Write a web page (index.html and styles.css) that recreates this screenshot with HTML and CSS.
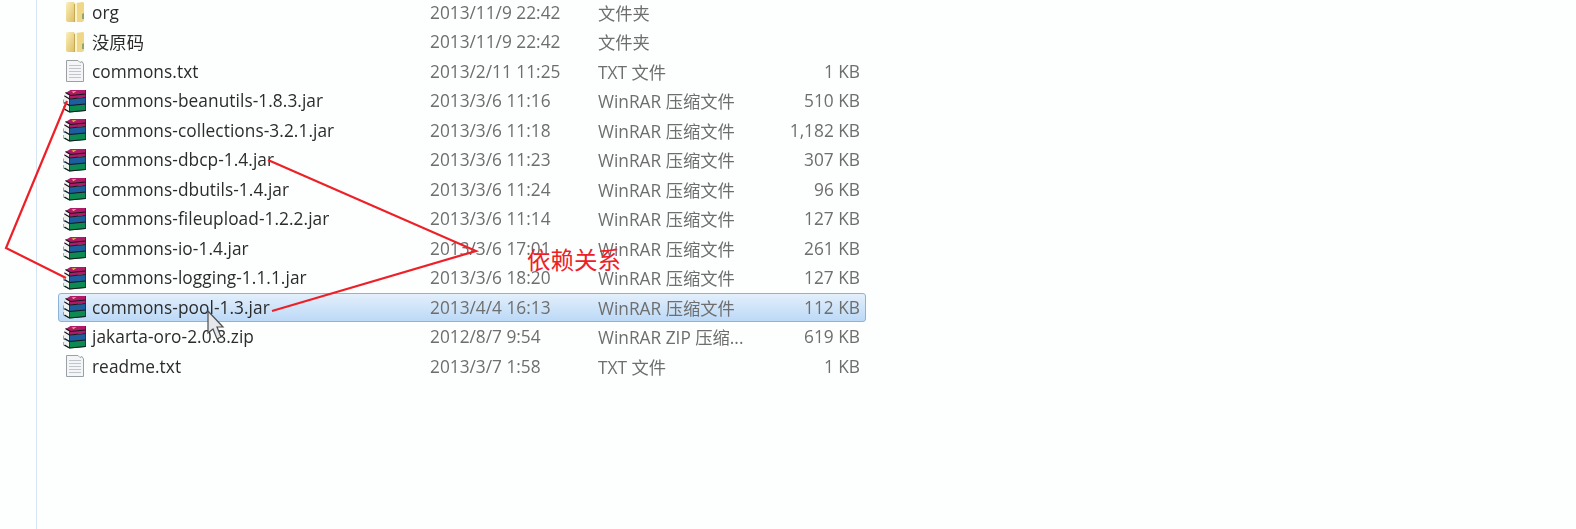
FILE: index.html
```html
<!DOCTYPE html>
<html lang="en">
<head>
    <meta charset="UTF-8">
    <title>commons</title>
    <link rel="stylesheet" href="styles.css">
</head>
<body>
    <svg class="defs" width="0" height="0">
        <defs>
            <linearGradient id="folderFill" x1="0" y1="0" x2="1" y2="1">
                <stop offset="0" stop-color="#fbf0b8"/>
                <stop offset="1" stop-color="#dcbc62"/>
            </linearGradient>
            <symbol id="folder" viewBox="0 0 20 22">
                <path d="M1 3 Q1 1 3 1 L9 1 L10 3 L10 21 L3 21 Q1 21 1 19 Z" fill="url(#folderFill)"/>
                <path d="M11 2 L18 1 Q19 1 19 3 L19 19 Q19 21 17 21 L11 21 Z" fill="#efd787"/>
                <path d="M10 2 L12 2 L12 21 L10 21 Z" fill="#fbf3c8"/>
                <path d="M9 3 L10 3 L10 21 L9 21 Z" fill="#c7a854"/>
                <path d="M17 13 L19 12 L19 18 L17 18 Z" fill="#8fa86a"/>
            </symbol>
            <symbol id="txt" viewBox="0 0 20 24">
                <path d="M1.500 1.500 L13 1.500 L15 3.500 L17 2.500 L18.500 5 L18.500 22.500 L1.500 22.500 Z" fill="#f3f5f7" stroke="#9aa0a4"/>
                <path d="M4 6.500 H16 M4 9.500 H16 M4 12.500 H16 M4 15.500 H16 M4 18.500 H16" stroke="#bfc5ca"/>
            </symbol>
            <symbol id="rar" viewBox="0 0 24 24">
                <!-- three stacked books: white page edge on the left, coloured cover on the right -->
                <path d="M1 17 L7 16 L23 15 L23 22 L7 23.500 L1 20.500 Z" fill="#0c8a52"/>
                <path d="M1 10.500 L7 10 L23 8.500 L23 15.500 L7 17 L1 14.500 Z" fill="#1d5e9e"/>
                <path d="M3 4 L8 1 L23 1 L23 8 L7 10 L2 7 Z" fill="#b01a68"/>
                <path d="M1.500 8 L7 10.500 L7 16 L1.500 13.500 Z M1.500 14.500 L7 17 L7 22.500 L1.500 20 Z M2.500 3.500 L7 6.500 L7 9.500 L2.500 7 Z" fill="#eef1ee"/>
                <path d="M2 7 L7 10 L23 8.500 M2 13.500 L7 16.500 L23 15 M2 20 L7 23 L23 21.500 M3 3.500 L8 6.500 L23 5" stroke="#15191c" stroke-width="1.200" fill="none"/>
                <path d="M7 6.500 V23 M23 1 V22" stroke="#15191c" stroke-width="0.800" fill="none"/>
                <path d="M9 2.500 L14 2 L11 4 Z" fill="#e9c34a"/>
            </symbol>
        </defs>
    </svg>

    <div class="sidebar-line"></div>

    <div class="file-list">
        <div class="file-row"><svg class="icon icon-folder"><use href="#folder"/></svg><span class="name">org</span><span class="detail">2013/11/9 22:42</span><span class="detail">文件夹</span><span class="detail size"></span></div>
        <div class="file-row"><svg class="icon icon-folder"><use href="#folder"/></svg><span class="name">没原码</span><span class="detail">2013/11/9 22:42</span><span class="detail">文件夹</span><span class="detail size"></span></div>
        <div class="file-row"><svg class="icon icon-txt"><use href="#txt"/></svg><span class="name">commons.txt</span><span class="detail">2013/2/11 11:25</span><span class="detail">TXT 文件</span><span class="detail size">1 KB</span></div>
        <div class="file-row"><svg class="icon"><use href="#rar"/></svg><span class="name">commons-beanutils-1.8.3.jar</span><span class="detail">2013/3/6 11:16</span><span class="detail">WinRAR 压缩文件</span><span class="detail size">510 KB</span></div>
        <div class="file-row"><svg class="icon"><use href="#rar"/></svg><span class="name">commons-collections-3.2.1.jar</span><span class="detail">2013/3/6 11:18</span><span class="detail">WinRAR 压缩文件</span><span class="detail size">1,182 KB</span></div>
        <div class="file-row"><svg class="icon"><use href="#rar"/></svg><span class="name">commons-dbcp-1.4.jar</span><span class="detail">2013/3/6 11:23</span><span class="detail">WinRAR 压缩文件</span><span class="detail size">307 KB</span></div>
        <div class="file-row"><svg class="icon"><use href="#rar"/></svg><span class="name">commons-dbutils-1.4.jar</span><span class="detail">2013/3/6 11:24</span><span class="detail">WinRAR 压缩文件</span><span class="detail size">96 KB</span></div>
        <div class="file-row"><svg class="icon"><use href="#rar"/></svg><span class="name">commons-fileupload-1.2.2.jar</span><span class="detail">2013/3/6 11:14</span><span class="detail">WinRAR 压缩文件</span><span class="detail size">127 KB</span></div>
        <div class="file-row"><svg class="icon"><use href="#rar"/></svg><span class="name">commons-io-1.4.jar</span><span class="detail">2013/3/6 17:01</span><span class="detail">WinRAR 压缩文件</span><span class="detail size">261 KB</span></div>
        <div class="file-row"><svg class="icon"><use href="#rar"/></svg><span class="name">commons-logging-1.1.1.jar</span><span class="detail">2013/3/6 18:20</span><span class="detail">WinRAR 压缩文件</span><span class="detail size">127 KB</span></div>
        <div class="file-row selected"><svg class="icon"><use href="#rar"/></svg><span class="name">commons-pool-1.3.jar</span><span class="detail">2013/4/4 16:13</span><span class="detail">WinRAR 压缩文件</span><span class="detail size">112 KB</span></div>
        <div class="file-row"><svg class="icon"><use href="#rar"/></svg><span class="name">jakarta-oro-2.0.8.zip</span><span class="detail">2012/8/7 9:54</span><span class="detail">WinRAR ZIP 压缩...</span><span class="detail size">619 KB</span></div>
        <div class="file-row"><svg class="icon icon-txt"><use href="#txt"/></svg><span class="name">readme.txt</span><span class="detail">2013/3/7 1:58</span><span class="detail">TXT 文件</span><span class="detail size">1 KB</span></div>
    </div>

    <!-- red pen marks drawn over the list -->
    <svg class="marks" width="1576" height="529">
        <polyline points="67,101 6,248 66,278" fill="none" stroke="#ee2027" stroke-width="2.200"/>
        <polyline points="268,160 476,251 272,311" fill="none" stroke="#ee2027" stroke-width="2.200"/>
        <path d="M208 311 L208 333 L213 329 L217 339 L221 337 L217 327 L223 327 Z" fill="#e4e8ec" stroke="#4c4c4c" stroke-width="1.200"/>
    </svg>
    <div class="note">依赖关系</div>
</body>
</html>
```

FILE: styles.css
```css
html, body {
    margin: 0;
    height: 529px;
    overflow: hidden;
}
body {
    background-color: #fdfefe;
    font-family: "Open Sans", "Noto Sans CJK SC", sans-serif;
    position: relative;
}
.defs {
    position: absolute;
}
.sidebar-line {
    position: absolute;
    left: 36px;
    top: 0;
    bottom: 0;
    width: 1px;
    background-color: #d5e5f3;
}
.file-list {
    margin: -2.5px 0 0 58px;
    width: 808px;
    filter: blur(0.4px);
}
.file-row {
    display: grid;
    grid-template-columns: 33px 338px 168px 170px 1fr;
    align-items: center;
    height: 29.5px;
    box-sizing: border-box;
    border: 1px solid transparent;
    border-radius: 3px;
    font-size: 17.3px;
}
.file-row.selected {
    border-color: #8fb3d6;
    background: linear-gradient(#e3effb, #bcd9f7);
}
.icon {
    width: 25px;
    height: 24px;
    margin-left: 3px;
}
.icon-folder {
    width: 20px;
    height: 22px;
    margin-left: 6px;
}
.icon-txt {
    width: 20px;
    height: 24px;
    margin-left: 6px;
}
.name {
    color: #2c2c2c;
    white-space: nowrap;
    letter-spacing: 0.06px;
}
.detail {
    color: #6e6e6e;
    white-space: nowrap;
}
.size {
    text-align: right;
    padding-right: 5px;
}
.marks {
    position: absolute;
    left: 0;
    top: 0;
}
.note {
    position: absolute;
    left: 527px;
    top: 245px;
    color: #ee2027;
    font-size: 23.5px;
    line-height: 28px;
    font-family: "Noto Sans CJK SC", sans-serif;
}
```
